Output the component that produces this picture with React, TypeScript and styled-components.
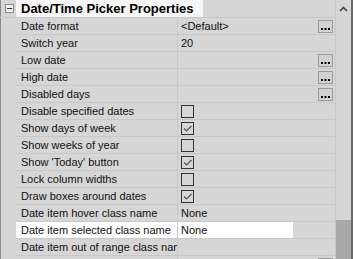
import React from 'react'
import styled, { createGlobalStyle } from 'styled-components'

const GlobalStyle = createGlobalStyle`
    html, body {
        margin: 0;
        padding: 0;
        background: #d6d6d6;
    }
`

type Kind = 'text' | 'button' | 'check'

interface Prop {
    name: string
    kind: Kind
    value?: string
    checked?: boolean
    selected?: boolean
}

const PROPS: Prop[] = [
    { name: 'Date format', kind: 'button', value: '<Default>' },
    { name: 'Switch year', kind: 'text', value: '20' },
    { name: 'Low date', kind: 'button' },
    { name: 'High date', kind: 'button' },
    { name: 'Disabled days', kind: 'button' },
    { name: 'Disable specified dates', kind: 'check', checked: false },
    { name: 'Show days of week', kind: 'check', checked: true },
    { name: 'Show weeks of year', kind: 'check', checked: false },
    { name: "Show 'Today' button", kind: 'check', checked: true },
    { name: 'Lock column widths', kind: 'check', checked: false },
    { name: 'Draw boxes around dates', kind: 'check', checked: true },
    { name: 'Date item hover class name', kind: 'text', value: 'None' },
    { name: 'Date item selected class name', kind: 'text', value: 'None', selected: true },
    { name: 'Date item out of range class name', kind: 'text', value: '' },
    { name: '', kind: 'button' },
]

const Check = ({ checked }: { checked?: boolean }) => (
    <CheckBox>
        {checked && (
            <svg width="11" height="11" viewBox="0 0 11 11">
                <path d="M2 5.5 L4.5 8 L9.5 3" fill="none" stroke="#555" strokeWidth="1.2" />
            </svg>
        )}
    </CheckBox>
)

// the "..." on a property's browse button
const Dots = () => (
    <svg width="13" height="11" viewBox="0 0 13 11">
        <rect x="2" y="7" width="2" height="2" fill="#000" />
        <rect x="5.5" y="7" width="2" height="2" fill="#000" />
        <rect x="9" y="7" width="2" height="2" fill="#000" />
    </svg>
)

export default function App() {
    return (
        <>
            <GlobalStyle />
            <Frame>
                <Grid>
                    <HeaderRow>
                        <Gutter>
                            <Collapse>
                                <svg width="7" height="7" viewBox="0 0 7 7">
                                    <path d="M1 3.5 H6" stroke="#333" strokeWidth="1" />
                                </svg>
                            </Collapse>
                        </Gutter>
                        <HeaderTitle>Date/Time Picker Properties</HeaderTitle>
                    </HeaderRow>
                    {PROPS.map((p, i) => (
                        <Row key={i}>
                            <Gutter />
                            <Cells $selected={p.selected}>
                                <NameCell>{p.name}</NameCell>
                                <ValueCell>
                                    {p.kind === 'check' ? <Check checked={p.checked} /> : <span>{p.value}</span>}
                                    {p.kind === 'button' && (
                                        <Ellipsis>
                                            <Dots />
                                        </Ellipsis>
                                    )}
                                </ValueCell>
                            </Cells>
                        </Row>
                    ))}
                </Grid>
                <Scrollbar>
                    <ArrowUp>
                        <svg width="9" height="6" viewBox="0 0 9 6">
                            <path d="M1 5 L4.5 1.5 L8 5" fill="none" stroke="#444" strokeWidth="1.6" />
                        </svg>
                    </ArrowUp>
                    <Track />
                    <Thumb />
                </Scrollbar>
                <EdgeLine />
            </Frame>
        </>
    )
}

const Frame = styled.div`
    width: 353px;
    height: 259px;
    display: flex;
    overflow: hidden;
    background: #d6d6d6;
    font-family: 'Liberation Sans', Arial, sans-serif;
    font-size: 11px;
    color: #111;
`
const Grid = styled.div`
    width: 335px;
    display: flex;
    flex-direction: column;
    flex-shrink: 0;
`
const Gutter = styled.div`
    width: 16px;
    flex-shrink: 0;
    box-sizing: border-box;
    border-left: 1px solid #8c8c8c;
    padding-left: 4px;
    display: flex;
    align-items: center;
    background: #d6d6d6;
`
const Collapse = styled.div`
    width: 9px;
    height: 9px;
    box-sizing: border-box;
    border: 1px solid #8a8a8a;
    background: #f2f2f2;
    display: flex;
`
const HeaderRow = styled.div`
    height: 18px;
    display: flex;
    flex-shrink: 0;
    box-sizing: border-box;
    border-bottom: 1px solid #c8c8c8;
`
const HeaderTitle = styled.div`
    width: 187px;
    background: #f6f6f6;
    font-weight: bold;
    font-size: 13px;
    padding-left: 5px;
    box-sizing: border-box;
    line-height: 17px;
    color: #000;
    white-space: nowrap;
`
const Row = styled.div`
    height: 17px;
    display: flex;
    flex-shrink: 0;
`
const Cells = styled.div<{ $selected?: boolean }>`
    flex: 1;
    display: flex;
    box-sizing: border-box;
    border-bottom: 1px solid #c8c8c8;
    background: ${p => (p.$selected ? 'linear-gradient(to right, #fff 277px, transparent 277px)' : 'transparent')};
`
const NameCell = styled.div`
    width: 162px;
    flex-shrink: 0;
    box-sizing: border-box;
    border-right: 1px solid #c8c8c8;
    padding-left: 5px;
    line-height: 16px;
    white-space: nowrap;
    overflow: hidden;
`
const ValueCell = styled.div`
    flex: 1;
    display: flex;
    align-items: center;
    justify-content: space-between;
    padding-left: 3px;
    padding-right: 2px;
    line-height: 16px;
`
const Ellipsis = styled.div`
    width: 15px;
    height: 13px;
    box-sizing: border-box;
    border: 1px solid #9a9a9a;
    background: #d2d2d2;
    display: flex;
    align-items: center;
    justify-content: center;
`
const CheckBox = styled.div`
    width: 13px;
    height: 13px;
    box-sizing: border-box;
    border: 1px solid #333;
    display: flex;
    align-items: center;
    justify-content: center;
`
const Scrollbar = styled.div`
    width: 16px;
    display: flex;
    flex-direction: column;
    background: #d6d6d6;
    border-left: 1px solid #c8c8c8;
    box-sizing: border-box;
`
const ArrowUp = styled.div`
    height: 17px;
    display: flex;
    align-items: center;
    justify-content: center;
`
const Track = styled.div`
    height: 203px;
`
const Thumb = styled.div`
    flex: 1;
    background: #a9a9a9;
`
const EdgeLine = styled.div`
    width: 2px;
    background: #6a6a6a;
`
